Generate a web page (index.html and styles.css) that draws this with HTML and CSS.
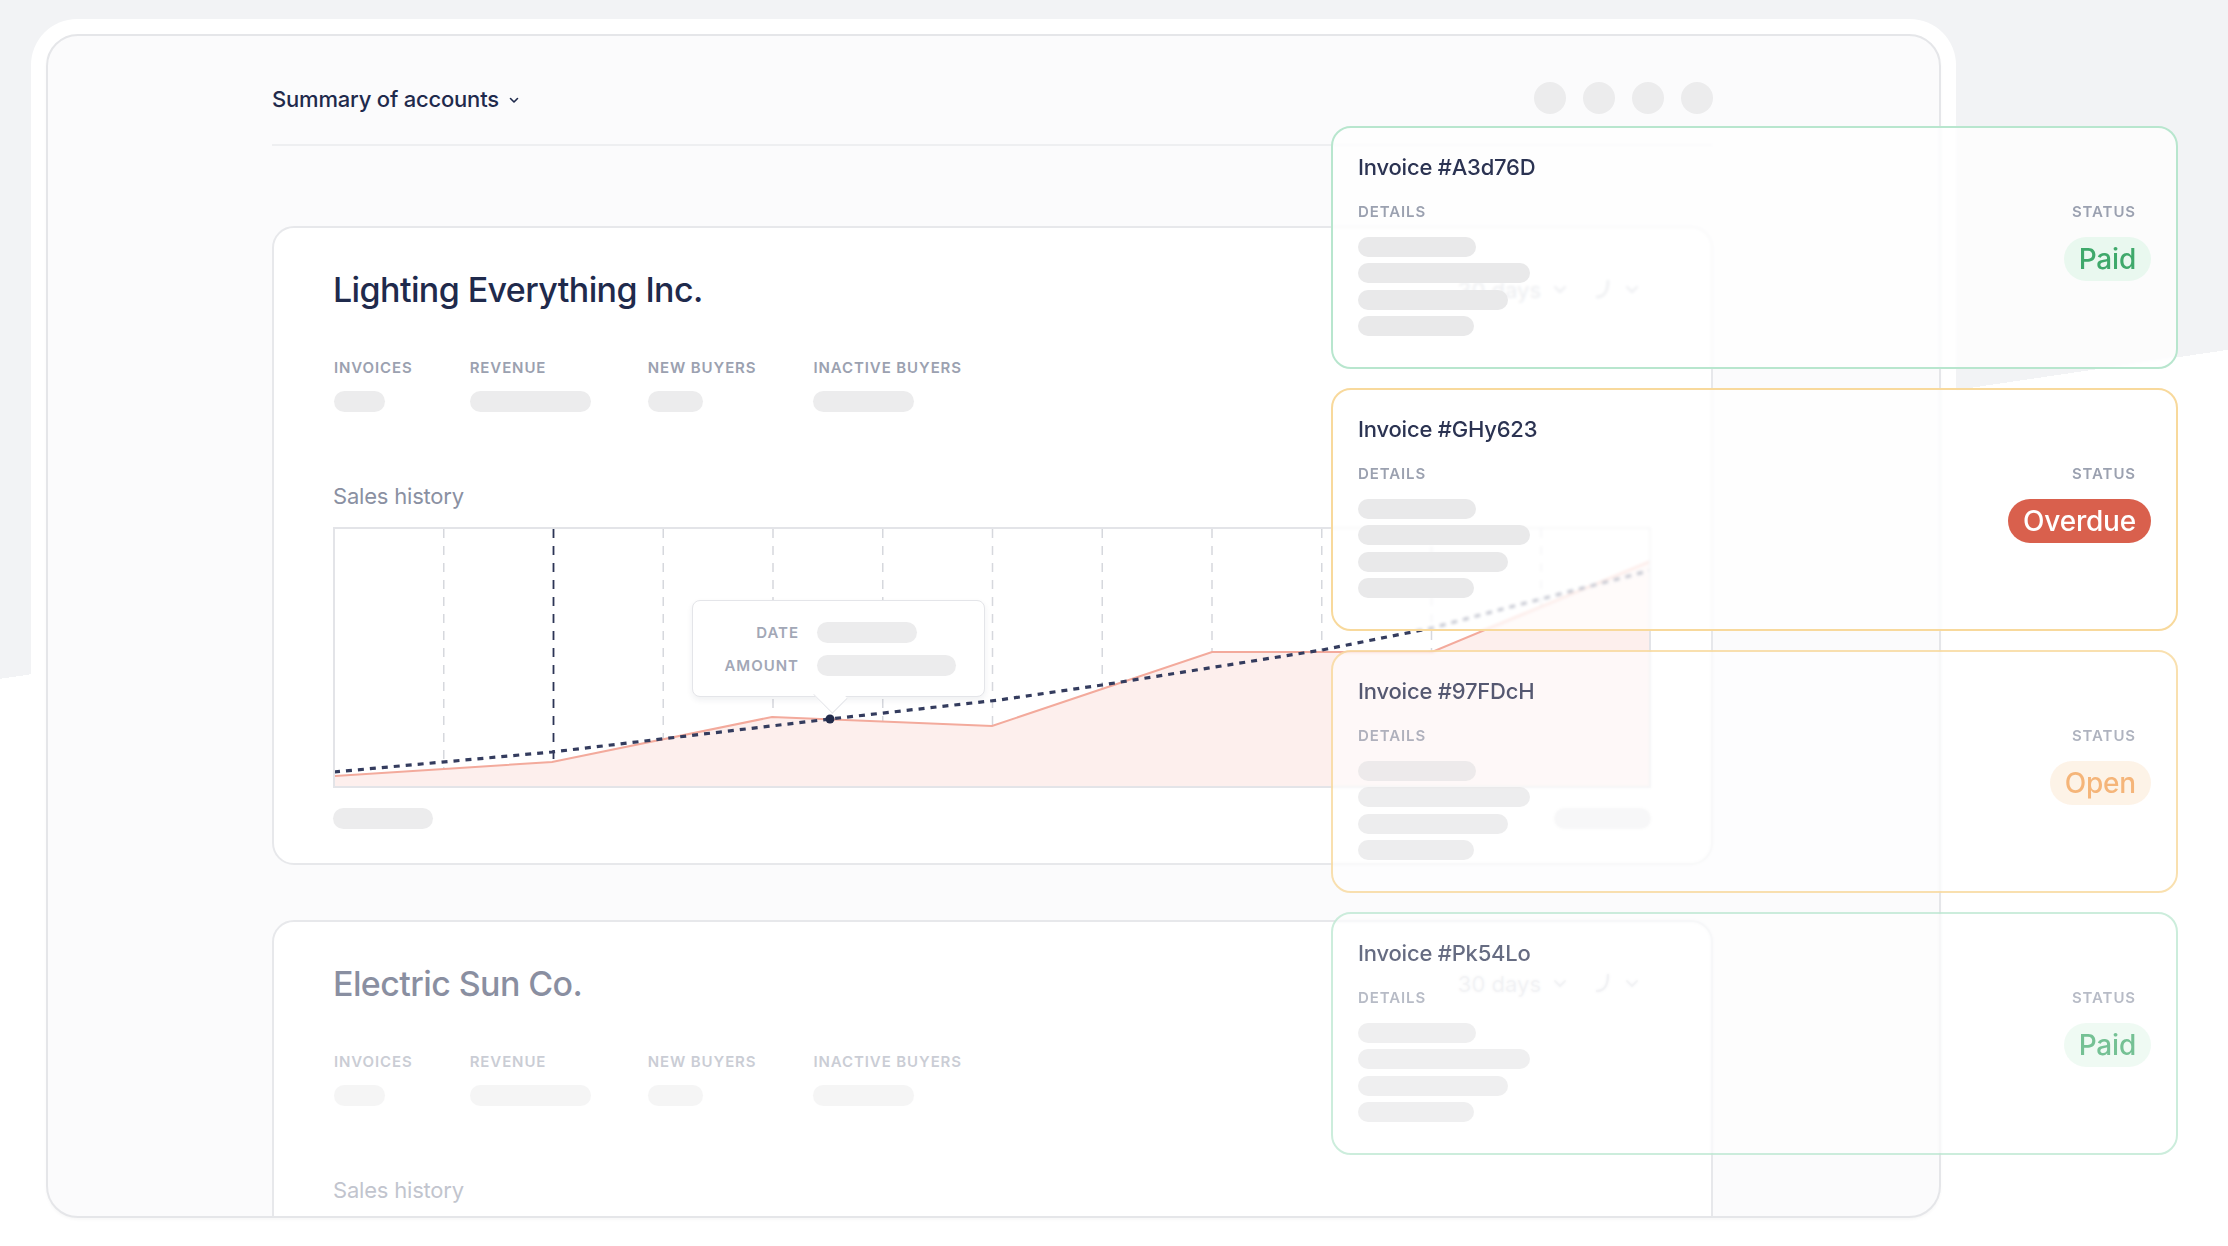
FILE: index.html
```html
<!DOCTYPE html>
<html lang="en">
<head>
    <meta charset="UTF-8">
    <meta name="viewport" content="width=device-width, initial-scale=1.0">
    <title>Summary of accounts</title>
    <link rel="stylesheet" href="styles.css">
</head>
<body>
    <div class="frame">
        <div class="window">
            <div class="header">
                <div class="header-title">
                    Summary of accounts
                    <svg class="chevron" width="10" height="7" viewBox="0 0 10 7"><path d="M1.5 1.5 L5 5 L8.5 1.5" fill="none" stroke="currentColor" stroke-width="1.6" stroke-linecap="round" stroke-linejoin="round"/></svg>
                </div>
                <div class="dots">
                    <span class="dot"></span>
                    <span class="dot"></span>
                    <span class="dot"></span>
                    <span class="dot"></span>
                </div>
            </div>

            <!-- account: Lighting Everything -->
            <div class="account">
                <div class="account-top">
                    <h2 class="account-name">Lighting Everything Inc.</h2>
                    <div class="range">
                        30 days
                        <svg width="14" height="9" viewBox="0 0 14 9"><path d="M2 2 L7 7 L12 2" fill="none" stroke="currentColor" stroke-width="2" stroke-linecap="round"/></svg>
                        <svg class="range-icon" width="20" height="22" viewBox="0 0 20 22"><path d="M15 2 C15 12 11 18 4 18" fill="none" stroke="currentColor" stroke-width="2.4" stroke-linecap="round"/></svg>
                        <svg width="14" height="9" viewBox="0 0 14 9"><path d="M2 2 L7 7 L12 2" fill="none" stroke="currentColor" stroke-width="2" stroke-linecap="round"/></svg>
                    </div>
                </div>
                <div class="stats">
                    <div class="stat"><span class="label">Invoices</span><span class="pill" style="width: 51px"></span></div>
                    <div class="stat"><span class="label">Revenue</span><span class="pill" style="width: 121px"></span></div>
                    <div class="stat"><span class="label">New buyers</span><span class="pill" style="width: 55px"></span></div>
                    <div class="stat"><span class="label">Inactive buyers</span><span class="pill" style="width: 101px"></span></div>
                </div>
                <div class="section-title">Sales history</div>
                <div class="chart">
                    <svg width="1314" height="257" viewBox="0 0 1314 257">
                        <g stroke="#d6d8dd" stroke-width="1.5" stroke-dasharray="9 8">
                            <line x1="108.75" y1="0" x2="108.75" y2="257"/>
                            <line x1="328.25" y1="0" x2="328.25" y2="257"/>
                            <line x1="438" y1="0" x2="438" y2="257"/>
                            <line x1="547.75" y1="0" x2="547.75" y2="257"/>
                            <line x1="657.5" y1="0" x2="657.5" y2="257"/>
                            <line x1="767.25" y1="0" x2="767.25" y2="257"/>
                            <line x1="877" y1="0" x2="877" y2="257"/>
                            <line x1="986.75" y1="0" x2="986.75" y2="257"/>
                            <line x1="1096.5" y1="0" x2="1096.5" y2="257"/>
                            <line x1="1206.25" y1="0" x2="1206.25" y2="257"/>
                        </g>
                        <line x1="218.5" y1="0" x2="218.5" y2="257" stroke="#2c3455" stroke-width="1.8" stroke-dasharray="9 8"/>
                        <!-- sales area -->
                        <polygon points="0,247 217,233 437,188 657,197 877,123 1097,123 1316,32 1316,257 0,257" fill="#fdefed"/>
                        <polyline points="0,247 217,233 437,188 657,197 877,123 1097,123 1316,32" fill="none" stroke="#f3aa9c" stroke-width="2"/>
                        <!-- trend -->
                        <polyline points="-1,243 217,223 495,190 664,171 767,156 987,121 1097,99 1164,81 1317,41" fill="none" stroke="#343c5e" stroke-width="3.2" stroke-dasharray="6 6"/>
                        <circle cx="495" cy="190" r="4.5" fill="#222a4a"/>
                    </svg>
                    <div class="tooltip">
                        <span class="label">Date</span><span class="pill" style="width: 100px"></span>
                        <span class="label">Amount</span><span class="pill" style="width: 139px"></span>
                    </div>
                </div>
                <div class="chart-foot">
                    <span class="pill" style="width: 100px"></span>
                    <span class="pill" style="width: 97px"></span>
                </div>
            </div>

            <!-- account: Electric Sun -->
            <div class="account muted">
                <div class="account-top">
                    <h2 class="account-name">Electric Sun Co.</h2>
                    <div class="range">
                        30 days
                        <svg width="14" height="9" viewBox="0 0 14 9"><path d="M2 2 L7 7 L12 2" fill="none" stroke="currentColor" stroke-width="2" stroke-linecap="round"/></svg>
                        <svg class="range-icon" width="20" height="22" viewBox="0 0 20 22"><path d="M15 2 C15 12 11 18 4 18" fill="none" stroke="currentColor" stroke-width="2.4" stroke-linecap="round"/></svg>
                        <svg width="14" height="9" viewBox="0 0 14 9"><path d="M2 2 L7 7 L12 2" fill="none" stroke="currentColor" stroke-width="2" stroke-linecap="round"/></svg>
                    </div>
                </div>
                <div class="stats">
                    <div class="stat"><span class="label">Invoices</span><span class="pill" style="width: 51px"></span></div>
                    <div class="stat"><span class="label">Revenue</span><span class="pill" style="width: 121px"></span></div>
                    <div class="stat"><span class="label">New buyers</span><span class="pill" style="width: 55px"></span></div>
                    <div class="stat"><span class="label">Inactive buyers</span><span class="pill" style="width: 101px"></span></div>
                </div>
                <div class="section-title">Sales history</div>
                <div class="chart"></div>
            </div>
        </div>
    </div>

    <div class="invoices">
        <div class="invoice paid">
            <div class="invoice-title">Invoice #A3d76D</div>
            <div class="invoice-body">
                <div class="details">
                    <span class="label">Details</span>
                    <span class="bar" style="width: 118px"></span>
                    <span class="bar" style="width: 172px"></span>
                    <span class="bar" style="width: 150px"></span>
                    <span class="bar" style="width: 116px"></span>
                </div>
                <div class="status">
                    <span class="label">Status</span>
                    <span class="badge">Paid</span>
                </div>
            </div>
        </div>
        <div class="invoice overdue">
            <div class="invoice-title">Invoice #GHy623</div>
            <div class="invoice-body">
                <div class="details">
                    <span class="label">Details</span>
                    <span class="bar" style="width: 118px"></span>
                    <span class="bar" style="width: 172px"></span>
                    <span class="bar" style="width: 150px"></span>
                    <span class="bar" style="width: 116px"></span>
                </div>
                <div class="status">
                    <span class="label">Status</span>
                    <span class="badge">Overdue</span>
                </div>
            </div>
        </div>
        <div class="invoice open faded">
            <div class="invoice-title">Invoice #97FDcH</div>
            <div class="invoice-body">
                <div class="details">
                    <span class="label">Details</span>
                    <span class="bar" style="width: 118px"></span>
                    <span class="bar" style="width: 172px"></span>
                    <span class="bar" style="width: 150px"></span>
                    <span class="bar" style="width: 116px"></span>
                </div>
                <div class="status">
                    <span class="label">Status</span>
                    <span class="badge">Open</span>
                </div>
            </div>
        </div>
        <div class="invoice paid fainter">
            <div class="invoice-title">Invoice #Pk54Lo</div>
            <div class="invoice-body">
                <div class="details">
                    <span class="label">Details</span>
                    <span class="bar" style="width: 118px"></span>
                    <span class="bar" style="width: 172px"></span>
                    <span class="bar" style="width: 150px"></span>
                    <span class="bar" style="width: 116px"></span>
                </div>
                <div class="status">
                    <span class="label">Status</span>
                    <span class="badge">Paid</span>
                </div>
            </div>
        </div>
    </div>
</body>
</html>
```

FILE: styles.css
```css
body {
    font-family: Inter, 'Noto Sans', sans-serif;
    margin: 0;
    padding: 19px 0 0 31px;
    width: 2228px;
    height: 1246px;
    box-sizing: border-box;
    overflow: hidden;
    position: relative;
    color: #1f2a4c;
    background: linear-gradient(171.6deg, #f2f3f5 43.1%, #ffffff 43.1%);
}

.frame {
    width: 1925px;
    padding: 15px;
    box-sizing: border-box;
    background: #ffffff;
    border-radius: 46px 46px 0 0;
}

.window {
    height: 1184px;
    padding: 0 226px 0 224px;
    box-sizing: border-box;
    background: #fbfbfc;
    border: 2px solid #e5e6e9;
    border-radius: 32px;
    overflow: hidden;
    box-shadow: 0 2px 3px rgba(0, 0, 0, 0.03);
}

.header {
    display: flex;
    align-items: center;
    justify-content: space-between;
    height: 90px;
    margin-top: 18px;
    border-bottom: 2px solid #eeeff1;
}

.header-title {
    display: flex;
    align-items: center;
    font-size: 22px;
    font-weight: 500;
    letter-spacing: -0.2px;
}

.chevron {
    margin-left: 10px;
    margin-top: 2px;
}

.dots {
    display: flex;
    gap: 17px;
    margin-top: -2px;
}

.dot {
    width: 32px;
    height: 32px;
    border-radius: 50%;
    background: #ececed;
}

.account {
    margin-top: 80px;
    padding: 41px 60px 34px 59px;
    background: #ffffff;
    border: 2px solid #e7e8eb;
    border-radius: 22px;
}

.account + .account {
    margin-top: 55px;
}

.account.muted > * {
    opacity: 0.52;
}

.account-top {
    display: flex;
    align-items: center;
    justify-content: space-between;
}

.account-name {
    margin: 0;
    font-size: 34px;
    line-height: 41px;
    font-weight: 500;
    letter-spacing: -0.6px;
}

.range {
    display: flex;
    align-items: center;
    gap: 12px;
    margin-right: 12px;
    font-size: 22px;
    color: #b9bdc8;
}

.range-icon {
    margin-left: 14px;
}

.label {
    font-size: 15px;
    line-height: 18px;
    font-weight: 600;
    letter-spacing: 0.9px;
    text-transform: uppercase;
    color: #9ba1b0;
}

.pill {
    display: block;
    height: 21px;
    border-radius: 11px;
    background: #ececed;
}

.stats {
    display: flex;
    gap: 57px;
    margin-top: 49px;
    padding-left: 1px;
}

.stat {
    display: flex;
    flex-direction: column;
    gap: 14px;
}

.section-title {
    margin-top: 71px;
    font-size: 22px;
    line-height: 27px;
    color: #8a90a2;
    letter-spacing: -0.2px;
}

.chart {
    position: relative;
    height: 257px;
    margin-top: 17px;
    border: 2px solid #e3e4e8;
}

.chart svg {
    display: block;
    overflow: hidden;
}

.tooltip {
    position: absolute;
    left: 357px;
    top: 71px;
    width: 293px;
    height: 97px;
    box-sizing: border-box;
    padding: 21px 0 0 31px;
    display: grid;
    grid-template-columns: 75px auto;
    column-gap: 18px;
    row-gap: 12px;
    align-items: center;
    align-content: start;
    background: #ffffff;
    border: 1px solid #e4e5e9;
    border-radius: 8px;
    box-shadow: 0 3px 6px rgba(30, 40, 70, 0.07);
}

.tooltip .label {
    text-align: right;
    color: #a2a7b6;
    letter-spacing: 1px;
}

.tooltip::after {
    content: '';
    position: absolute;
    left: 124px;
    bottom: -14px;
    width: 26px;
    height: 26px;
    background: #ffffff;
    border-right: 1px solid #e4e5e9;
    border-bottom: 1px solid #e4e5e9;
    transform: rotate(45deg) scaleY(0.8);
}

.chart-foot {
    display: flex;
    justify-content: space-between;
    margin-top: 20px;
}

.invoices {
    position: absolute;
    left: 1331px;
    top: 126px;
    width: 847px;
    display: flex;
    flex-direction: column;
    gap: 19px;
}

.invoice {
    height: 243px;
    box-sizing: border-box;
    padding: 26px 40px 0 25px;
    background: rgba(255, 255, 255, 0.72);
    backdrop-filter: blur(1.5px);
    border: 2px solid #b8e6ce;
    border-radius: 20px;
}

.invoice.overdue,
.invoice.open {
    border-color: #f8d99c;
}

.invoice.faded {
    opacity: 0.8;
}

.invoice.fainter {
    opacity: 0.72;
}

.invoice-title {
    font-size: 22px;
    font-weight: 500;
    color: #2b3352;
    letter-spacing: -0.2px;
}

.invoice-body {
    display: flex;
    justify-content: space-between;
    margin-top: 23px;
}

.details {
    display: flex;
    flex-direction: column;
    gap: 6.5px;
}

.details .label {
    margin-bottom: 9px;
}

.status {
    display: flex;
    flex-direction: column;
    align-items: flex-end;
    gap: 16px;
}

.bar {
    display: block;
    height: 20px;
    border-radius: 10px;
    background: #e9e9ea;
}

.badge {
    height: 44px;
    line-height: 44px;
    padding: 0 15px;
    margin-right: -15px;
    border-radius: 22px;
    font-size: 28px;
    font-weight: 500;
    letter-spacing: -0.2px;
}

.paid .badge {
    background: #e9f8ef;
    color: #3fa96b;
}

.overdue .badge {
    background: #d9604d;
    color: #ffffff;
}

.open .badge {
    background: #fdf0e2;
    color: #f3a358;
}
```
